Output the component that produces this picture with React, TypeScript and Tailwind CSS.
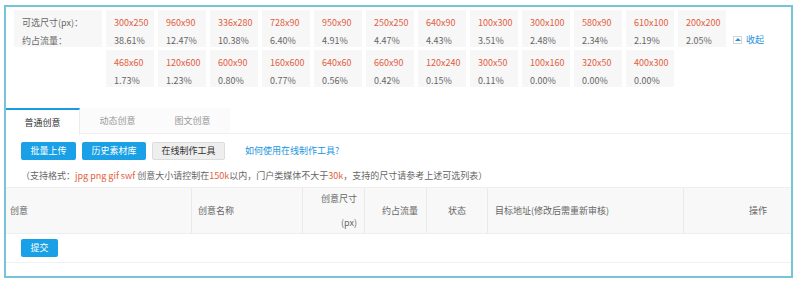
import React from "react";

const row1 = [
  ["300x250", "38.61%"],
  ["960x90", "12.47%"],
  ["336x280", "10.38%"],
  ["728x90", "6.40%"],
  ["950x90", "4.91%"],
  ["250x250", "4.47%"],
  ["640x90", "4.43%"],
  ["100x300", "3.51%"],
  ["300x100", "2.48%"],
  ["580x90", "2.34%"],
  ["610x100", "2.19%"],
  ["200x200", "2.05%"],
];

const row2 = [
  ["468x60", "1.73%"],
  ["120x600", "1.23%"],
  ["600x90", "0.80%"],
  ["160x600", "0.77%"],
  ["640x60", "0.56%"],
  ["660x90", "0.42%"],
  ["120x240", "0.15%"],
  ["300x50", "0.11%"],
  ["100x160", "0.00%"],
  ["320x50", "0.00%"],
  ["400x300", "0.00%"],
];

function SizeCell({ size, pct }: { size: string; pct: string }) {
  return (
    <div className="w-[48px] h-[37px] shrink-0 bg-[#f7f7f7] pl-[8px] pt-[4px] leading-[18px]">
      <div className="text-[#e2603d]">{size}</div>
      <div className="text-[#666]">{pct}</div>
    </div>
  );
}

export default function App() {
  return (
    <div className="w-[800px] h-[284px] bg-white pt-[5px] pl-[4px] font-['Noto_Sans_CJK_SC',sans-serif] text-[9px] text-[#666]">
      <div className="w-[789px] h-[273px] border-2 border-[#76c4d8] flex flex-col">
        {/* size list */}
        <div className="pl-[8px] pt-[3px]">
          <div className="flex gap-[4px]">
            <div className="w-[88px] h-[37px] shrink-0 bg-[#f7f7f7] pl-[8px] pt-[4px] leading-[18px]">
              <div>可选尺寸(px)：</div>
              <div>约占流量：</div>
            </div>
            {row1.map(([s, p]) => (
              <SizeCell key={s} size={s} pct={p} />
            ))}
            <div className="self-end mb-[1px] ml-[3px] flex items-center gap-[4px] leading-[13px] text-[#2a90dc]">
              <span className="w-[9px] h-[8px] border border-[#d5d5d5] bg-white flex items-center justify-center">
                <span className="w-0 h-0 border-l-[3px] border-r-[3px] border-b-[3px] border-l-transparent border-r-transparent border-b-[#2a90dc]" />
              </span>
              <span>收起</span>
            </div>
          </div>
          <div className="flex gap-[4px] mt-[3px] pl-[92px]">
            {row2.map(([s, p]) => (
              <SizeCell key={s} size={s} pct={p} />
            ))}
          </div>
        </div>

        {/* tabs */}
        <div className="mt-[21px] flex h-[26px] border-b border-[#f0f0f0]">
          <div className="w-[74px] h-[27px] border-t-2 border-t-[#1a9ae0] border-r border-r-[#ececec] bg-white flex items-center justify-center text-[#333]">
            普通创意
          </div>
          <div className="w-[75px] bg-[#fbfbfb] flex items-center justify-center text-[#999]">
            动态创意
          </div>
          <div className="w-[75px] bg-[#fbfbfb] flex items-center justify-center text-[#999]">
            图文创意
          </div>
        </div>

        {/* actions */}
        <div className="mt-[8px] pl-[15px] flex items-center gap-[6px]">
          <button className="w-[55px] h-[18px] rounded-[2px] bg-[#1aa0e6] text-white">批量上传</button>
          <button className="w-[64px] h-[18px] rounded-[2px] bg-[#1aa0e6] text-white">历史素材库</button>
          <button className="w-[73px] h-[18px] rounded-[2px] bg-[#eeeeee] border border-[#dcdcdc] text-[#333]">
            在线制作工具
          </button>
          <a className="ml-[14px] text-[#2196e0]">如何使用在线制作工具?</a>
        </div>

        <div className="mt-[7px] pl-[15px] leading-[18px] whitespace-nowrap">
          （支持格式：<span className="text-[#e2603d]">jpg png gif swf</span> 创意大小请控制在
          <span className="text-[#e2603d]">150k</span>以内，门户类媒体不大于
          <span className="text-[#e2603d]">30k</span>，支持的尺寸请参考上述可选列表）
        </div>

        {/* table */}
        <div className="mt-[2px] flex h-[47px] bg-[#f8f8f8] border-y border-[#eeeeee] leading-[24px]">
          <div className="w-[186px] border-r border-[#eaeaea] flex items-center pl-[4px]">创意</div>
          <div className="w-[111px] border-r border-[#eaeaea] flex items-center pl-[6px]">创意名称</div>
          <div className="w-[62px] border-r border-[#eaeaea] flex items-center justify-end pr-[7px] text-right">
            <div>
              创意尺寸
              <br />
              (px)
            </div>
          </div>
          <div className="w-[62px] border-r border-[#eaeaea] flex items-center justify-end pr-[8px]">约占流量</div>
          <div className="w-[61px] border-r border-[#eaeaea] flex items-center justify-center">状态</div>
          <div className="w-[196px] border-r border-[#eaeaea] flex items-center pl-[7px]">目标地址(修改后需重新审核)</div>
          <div className="flex-1 flex items-center justify-end pr-[24px]">操作</div>
        </div>
        <div className="h-[29px] border-b border-[#f0f0f0] flex items-center pl-[15px]">
          <button className="w-[37px] h-[18px] rounded-[2px] bg-[#1aa0e6] text-white">提交</button>
        </div>
      </div>
    </div>
  );
}
